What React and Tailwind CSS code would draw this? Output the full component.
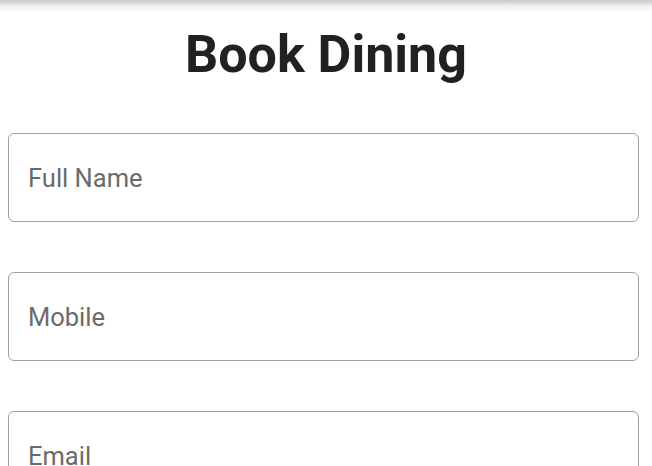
export default function App() {
  const fields = ["Full Name", "Mobile", "Email"];
  return (
    <div className="h-[466px] overflow-hidden bg-white" style={{ fontFamily: "Roboto, sans-serif" }}>
      <div className="h-3 bg-gradient-to-b from-[#c8c8c8] via-[#f0f0f0] to-white" />
      <h1 className="mt-[13px] text-center text-[52px] font-bold leading-[60px] text-[#212121]">Book Dining</h1>
      <div className="mt-[48px] flex flex-col gap-[50px] px-2">
        {fields.map((f) => (
          <input
            key={f}
            placeholder={f}
            className="h-[89px] w-[631px] shrink-0 rounded-[6px] border-[1.5px] border-[#a0a0a0] px-[19px] text-[25.5px] text-[#212121] placeholder:text-[#6b6b6b] outline-none"
          />
        ))}
      </div>
    </div>
  );
}
